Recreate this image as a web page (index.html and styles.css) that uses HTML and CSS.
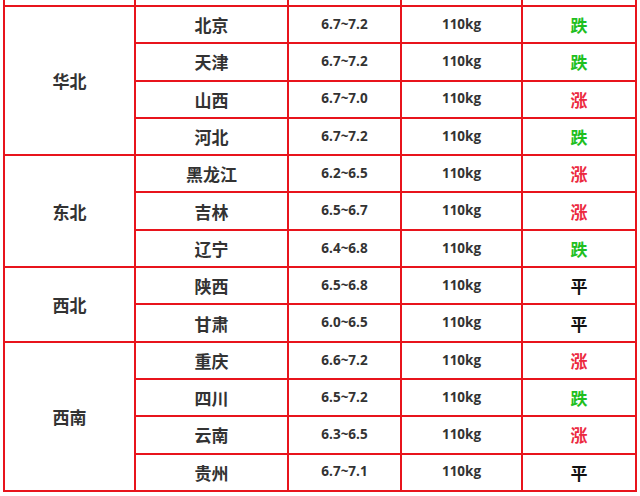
FILE: index.html
```html
<!DOCTYPE html>
<html lang="zh">
<head>
<meta charset="utf-8">
<link rel="stylesheet" href="styles.css">
</head>
<body>
<table class="price-table">
  <colgroup>
    <col class="c-region"><col class="c-prov"><col class="c-price"><col class="c-weight"><col class="c-trend">
  </colgroup>
  <tr class="cut"><td></td><td></td><td></td><td></td><td></td></tr>
  <tr><td class="region" rowspan="4">华北</td><td class="prov">北京</td><td class="num">6.7~7.2</td><td class="num">110kg</td><td class="trend down">跌</td></tr>
  <tr><td class="prov">天津</td><td class="num">6.7~7.2</td><td class="num">110kg</td><td class="trend down">跌</td></tr>
  <tr><td class="prov">山西</td><td class="num">6.7~7.0</td><td class="num">110kg</td><td class="trend up">涨</td></tr>
  <tr><td class="prov">河北</td><td class="num">6.7~7.2</td><td class="num">110kg</td><td class="trend down">跌</td></tr>
  <tr><td class="region" rowspan="3">东北</td><td class="prov">黑龙江</td><td class="num">6.2~6.5</td><td class="num">110kg</td><td class="trend up">涨</td></tr>
  <tr><td class="prov">吉林</td><td class="num">6.5~6.7</td><td class="num">110kg</td><td class="trend up">涨</td></tr>
  <tr><td class="prov">辽宁</td><td class="num">6.4~6.8</td><td class="num">110kg</td><td class="trend down">跌</td></tr>
  <tr><td class="region" rowspan="2">西北</td><td class="prov">陕西</td><td class="num">6.5~6.8</td><td class="num">110kg</td><td class="trend flat">平</td></tr>
  <tr><td class="prov">甘肃</td><td class="num">6.0~6.5</td><td class="num">110kg</td><td class="trend flat">平</td></tr>
  <tr><td class="region" rowspan="4">西南</td><td class="prov">重庆</td><td class="num">6.6~7.2</td><td class="num">110kg</td><td class="trend up">涨</td></tr>
  <tr><td class="prov">四川</td><td class="num">6.5~7.2</td><td class="num">110kg</td><td class="trend down">跌</td></tr>
  <tr><td class="prov">云南</td><td class="num">6.3~6.5</td><td class="num">110kg</td><td class="trend up">涨</td></tr>
  <tr><td class="prov">贵州</td><td class="num">6.7~7.1</td><td class="num">110kg</td><td class="trend flat">平</td></tr>
</table>
</body>
</html>
```
FILE: styles.css
```css
html, body {
  margin: 0;
  padding: 0;
  background: #fff;
}
body {
  padding-left: 3px;
  font-family: "Noto Sans CJK SC", "Noto Sans", sans-serif;
  color: #333;
}
.price-table {
  border-collapse: collapse;
  table-layout: fixed;
  width: 632px;
}
.c-region { width: 131px; }
.c-prov { width: 153px; }
.c-price { width: 113px; }
.c-weight { width: 121px; }
.c-trend { width: 114px; }
.price-table td {
  border: 2px solid #e8141c;
  height: 35.3px;
  padding: 0;
  text-align: center;
  vertical-align: middle;
  font-weight: bold;
  line-height: 1;
}
.price-table tr.cut td {
  border-top: none;
  height: 5px;
}
.region, .prov {
  font-size: 17px;
  color: #333;
}
.num {
  font-family: "Open Sans", "Noto Sans", sans-serif;
  font-size: 13.5px;
  color: #333;
}
.trend {
  font-size: 17px;
}
.down { color: #1fbf1f; }
.up { color: #ec2a3f; }
.flat { color: #111; }
```
